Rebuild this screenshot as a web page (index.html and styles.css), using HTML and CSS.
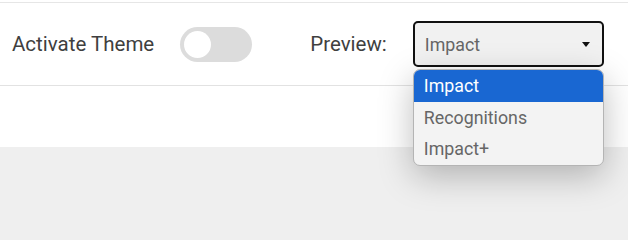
FILE: index.html
```html
<!DOCTYPE html>
<html>
<head>
<meta charset="utf-8">
<link rel="stylesheet" href="styles.css">
</head>
<body>
<div class="page">
  <div class="toolbar">
    <span class="label">Activate Theme</span>
    <span class="toggle"><span class="knob"></span></span>
    <span class="label preview">Preview:</span>
    <div class="select-wrap">
      <div class="select">
        <span class="value">Impact</span>
        <svg class="caret" width="8" height="5" viewBox="0 0 8 5"><path d="M0 0H8L4 5Z" fill="#111"/></svg>
      </div>
      <ul class="menu">
        <li class="item active">Impact</li>
        <li class="item">Recognitions</li>
        <li class="item">Impact+</li>
      </ul>
    </div>
  </div>
  <div class="spacer"></div>
  <div class="footer"></div>
</div>
</body>
</html>
```

FILE: styles.css
```css
* { box-sizing: border-box; }
html {
  margin: 0;
  padding: 0;
  background: #efefef;
}
body {
  margin: 0;
  padding: 0;
  background: #efefef;
  font-family: Roboto, "Liberation Sans", Arial, sans-serif;
  width: 628px;
  min-height: 208px;
}
.page {
  padding-top: 2px;
  background: #ffffff;
}
.toolbar {
  border-top: 1px solid #e6e6e6;
  border-bottom: 1px solid #e2e2e2;
  height: 84px;
  display: flex;
  align-items: center;
  padding-left: 12px;
}
.label {
  font-size: 20.5px;
  color: #3f3f3f;
}
.toggle {
  margin-left: 26px;
  width: 72px;
  height: 35px;
  border-radius: 18px;
  background: #dcdcdc;
  display: flex;
  align-items: center;
  padding-left: 4px;
}
.knob {
  width: 27px;
  height: 27px;
  border-radius: 50%;
  background: #ffffff;
}
.preview {
  margin-left: 58px;
}
.select-wrap {
  position: relative;
  margin-left: 26px;
}
.select {
  width: 191px;
  height: 46px;
  border: 2px solid #111111;
  border-radius: 5px;
  background: #f1f1f1;
  display: flex;
  align-items: center;
  justify-content: space-between;
  padding: 0 12px 0 10px;
}
.value {
  font-size: 17.8px;
  color: #666666;
}
.caret {
  display: block;
}
.menu {
  position: absolute;
  left: 0;
  top: 48px;
  width: 191px;
  margin: 0;
  padding: 0;
  list-style: none;
  background: #f3f3f3;
  border: 1px solid #b4b4b4;
  border-radius: 7px;
  overflow: hidden;
  box-shadow: 0 10px 34px rgba(0,0,0,0.26);
  z-index: 2;
}
.item {
  height: 31.5px;
  line-height: 31.5px;
  padding-left: 10px;
  font-size: 17.8px;
  color: #666666;
}
.item.active {
  background: #1967d2;
  color: #ffffff;
}
.spacer {
  height: 61px;
  background: #ffffff;
}
.footer {
  height: 70px;
  background: #efefef;
}
```
